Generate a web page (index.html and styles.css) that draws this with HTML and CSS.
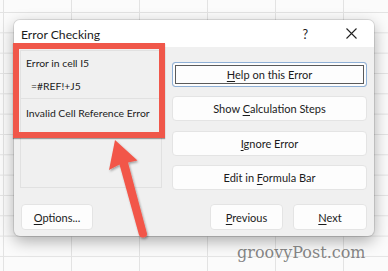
FILE: index.html
```html
<!DOCTYPE html>
<html>
<head>
<meta charset="utf-8">
<link rel="stylesheet" href="styles.css">
</head>
<body>
<div class="stage">
  <div class="dialog">
    <div class="titlebar">
      <span class="title">Error Checking</span>
      <span class="help">?</span>
      <svg class="close" width="11" height="11" viewBox="0 0 11 11"><path d="M0.5 0.5L10.5 10.5M10.5 0.5L0.5 10.5" stroke="#222" stroke-width="1.1" fill="none"/></svg>
    </div>
    <div class="body">
      <div class="main">
        <div class="info">
          <div class="row r1"><span>Error in cell I5</span></div>
          <div class="row r2"><span>=#REF!+J5</span></div>
          <div class="row r3"><span>Invalid Cell Reference Error</span></div>
        </div>
        <div class="actions">
          <div class="btn focus"><span><u>H</u>elp on this Error</span></div>
          <div class="btn"><span>Show <u>C</u>alculation Steps</span></div>
          <div class="btn"><span><u>I</u>gnore Error</span></div>
          <div class="btn"><span>Edit in <u>F</u>ormula Bar</span></div>
        </div>
      </div>
      <div class="footer">
        <div class="btn options"><span><u>O</u>ptions...</span></div>
        <div class="nav">
          <div class="btn prev"><span><u>P</u>revious</span></div>
          <div class="btn next"><span><u>N</u>ext</span></div>
        </div>
      </div>
    </div>
  </div>
  <div class="highlight"></div>
  <svg class="arrow" width="388" height="271" viewBox="0 0 388 271">
    <defs>
      <filter id="sh" x="-20%" y="-20%" width="140%" height="140%">
        <feDropShadow dx="1" dy="1.5" stdDeviation="1" flood-color="#000" flood-opacity="0.35"/>
      </filter>
    </defs>
    <path filter="url(#sh)" fill="#f2574a" d="M115 140 L137.5 160.5 L128 162.5 L147 233.5 Q147.5 237 143.5 237.5 Q140 238 139 235 L119.5 164.5 L109 170 Z"/>
  </svg>
  <div class="watermark">groovyPost.com</div>
</div>
</body>
</html>
```
FILE: styles.css
```css
html, body {
  margin: 0;
  padding: 0;
}
body {
  width: 388px;
  height: 271px;
  overflow: hidden;
  background-color: #fbfbfb;
  background-image:
    linear-gradient(to right, #e3e3e3 1px, transparent 1px),
    linear-gradient(to bottom, #e3e3e3 1px, transparent 1px);
  background-size: 68px 20.33px;
  background-position: 3px 12px;
  font-family: Lato, "Noto Sans", sans-serif;
  color: #1b1b1b;
}
.stage {
  position: relative;
  width: 388px;
  height: 271px;
  padding: 20px 0 0 14px;
  box-sizing: border-box;
}
.dialog {
  width: 360px;
  height: 216px;
  border-radius: 6px;
  background: #f0f0f0;
  box-shadow: 0 5px 16px rgba(0,0,0,0.32), 0 0 0 1px rgba(0,0,0,0.10);
  overflow: hidden;
  display: flex;
  flex-direction: column;
}
.titlebar {
  height: 27px;
  background: #fff;
  display: flex;
  align-items: center;
  padding: 0 0 0 7px;
  flex: none;
}
.title {
  font-size: 12.2px;
  flex: 1;
  padding-top: 1px;
}
.help {
  font-size: 12.5px;
  margin-right: 38px;
  padding-top: 1px;
}
.close {
  margin-right: 17px;
}
.body {
  flex: 1;
  display: flex;
  flex-direction: column;
  padding: 3px 7px 6px 6px;
}
.main {
  display: flex;
  gap: 10px;
  height: 139px;
}
.info {
  width: 142px;
  height: 138px;
  box-sizing: border-box;
  border: 1px solid #e1e1e1;
  font-size: 10.4px;
}
.row {
  display: flex;
  align-items: center;
  padding-left: 5px;
}
.r1 { height: 23px; }
.r2 { height: 24px; padding-left: 10px; border-bottom: 1px solid #e1e1e1; }
.r3 { height: 27px; }
.actions {
  flex: 1;
  display: flex;
  flex-direction: column;
  gap: 9.3px;
  padding-top: 12px;
}
.btn {
  height: 25px;
  box-sizing: border-box;
  background: #fdfdfd;
  border: 1px solid #e4e4e4;
  border-radius: 4px;
  display: flex;
  align-items: center;
  justify-content: center;
  font-size: 11px;
  flex: none;
}
.btn u {
  text-decoration-thickness: 1px;
  text-underline-offset: 1.5px;
}
.btn.focus {
  border-color: #8fb0d6;
  box-shadow: inset 0 0 0 2px #fdfdfd, inset 0 0 0 3px #5a5a5a;
  border-radius: 3px;
}
.footer {
  margin-top: 15px;
  display: flex;
  justify-content: space-between;
}
.footer .btn { height: 26px; }
.options {
  width: 72px;
  margin-left: 1px;
}
.nav {
  display: flex;
  gap: 10px;
}
.prev { width: 73px; }
.next { width: 74px; }
.highlight {
  position: absolute;
  left: 13px;
  top: 43px;
  width: 152px;
  height: 95px;
  box-sizing: border-box;
  border: 6px solid #f0574a;
  box-shadow: 0 1px 1px rgba(0,0,0,0.35);
}
.arrow {
  position: absolute;
  left: 0;
  top: 0;
}
.watermark {
  position: absolute;
  left: 237px;
  top: 243px;
  font-family: "DejaVu Serif", serif;
  font-size: 16px;
  color: rgba(110,110,110,0.85);
  line-height: 20px;
}
```
